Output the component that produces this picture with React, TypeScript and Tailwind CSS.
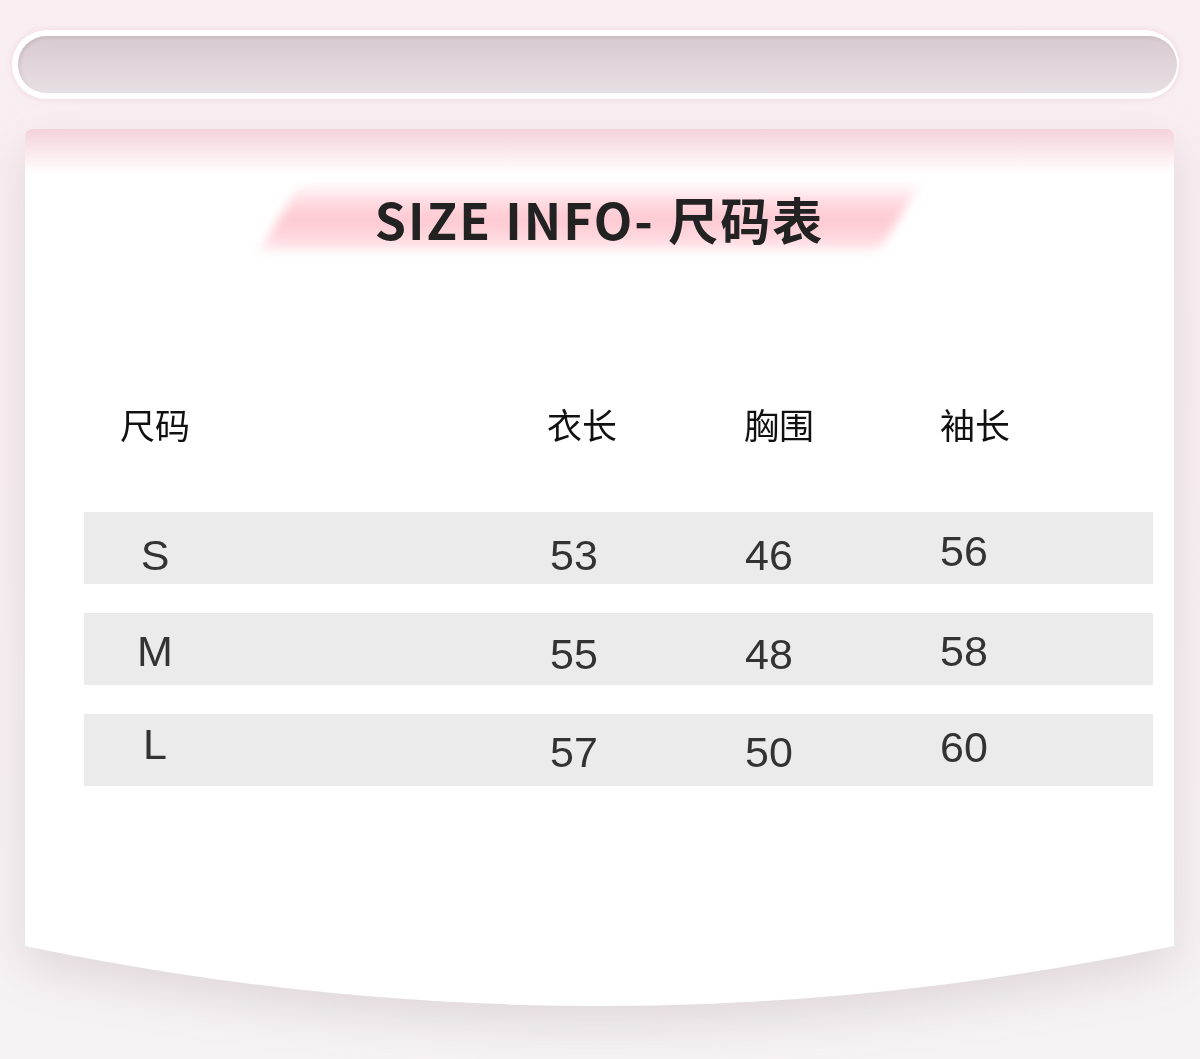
const rows = [
  { size: "S", values: ["53", "46", "56"], sizePad: "pt-[14px]", numPad: "pt-[14px]", lastPad: "pt-[6px]" },
  { size: "M", values: ["55", "48", "58"], sizePad: "pt-[4px]", numPad: "pt-[10px]", lastPad: "pt-[4px]" },
  { size: "L", values: ["57", "50", "60"], sizePad: "pb-[11px]", numPad: "pt-[5px]", lastPad: "pb-[5px]" },
];

const cjk = { fontFamily: '"Noto Sans CJK SC", "Noto Sans", sans-serif' };
const latin = { fontFamily: '"Liberation Sans", Arial, sans-serif' };

export default function App() {
  return (
    <div className="w-[1200px] h-[1059px] overflow-hidden bg-gradient-to-b from-[#f9eef2] via-[#f7eff2] to-[#f7f2f4]">
      {/* top search-like pill */}
      <div className="pt-[30px]">
        <div className="ml-[12px] w-[1167px] h-[69px] rounded-full bg-white pt-[6px] pb-[6px] pl-[6px] pr-[2px] shadow-[0_0_6px_rgba(236,196,210,0.6)]">
          <div className="h-full rounded-full bg-gradient-to-b from-[#d8cad0] to-[#e7dfe3] shadow-[inset_2px_2px_3px_rgba(150,130,140,0.2)]" />
        </div>
      </div>

      {/* card */}
      <div className="ml-[25px] mt-[30px] w-[1149px] drop-shadow-[0_18px_22px_rgba(120,105,112,0.18)]">
        <div className="h-[817px] rounded-t-[8px] bg-gradient-to-b from-[#f4d2d9] via-white via-[45px] to-white">
          {/* title */}
          <div className="pt-[58px] flex justify-center">
            <div className="relative w-[650px] h-[62px] flex items-center justify-center">
              <div className="absolute left-[4px] right-[26px] top-[1px] bottom-[0px] -skew-x-[30deg] bg-gradient-to-b from-[#ffeef1] via-[#fec7d0] to-[#fee3e8] blur-[6px]" />
              <div
                className="relative text-[50px] leading-none font-bold tracking-[2px] text-[#222]"
                style={cjk}
              >
                SIZE INFO- 尺码表
              </div>
            </div>
          </div>

          {/* header */}
          <div className="mt-[149px] ml-[59px] w-[1069px] h-[50px] grid grid-cols-[463px_197px_196px_1fr] items-center text-[35px] text-[#111]" style={cjk}>
            <div className="w-[142px] text-center">尺码</div>
            <div>衣长</div>
            <div>胸围</div>
            <div>袖长</div>
          </div>

          {/* rows */}
          <div className="mt-[64px] ml-[59px] w-[1069px] flex flex-col gap-[29px]">
            {rows.map((r) => (
              <div
                key={r.size}
                className="h-[72px] bg-[#ebebeb] grid grid-cols-[463px_197px_196px_1fr] items-center text-[43px] leading-none text-[#333]"
                style={latin}
              >
                <div className={`w-[142px] text-center ${r.sizePad}`}>{r.size}</div>
                <div className={`pl-[3px] ${r.numPad}`}>{r.values[0]}</div>
                <div className={`pl-[1px] ${r.numPad}`}>{r.values[1]}</div>
                <div className={`pl-[0px] ${r.lastPad}`}>{r.values[2]}</div>
              </div>
            ))}
          </div>
        </div>
        <svg width="1149" height="61" viewBox="0 0 1149 61" className="block">
          <path d="M0 0 H1149 Q574.5 120 0 0 Z" fill="#ffffff" />
        </svg>
      </div>
    </div>
  );
}
